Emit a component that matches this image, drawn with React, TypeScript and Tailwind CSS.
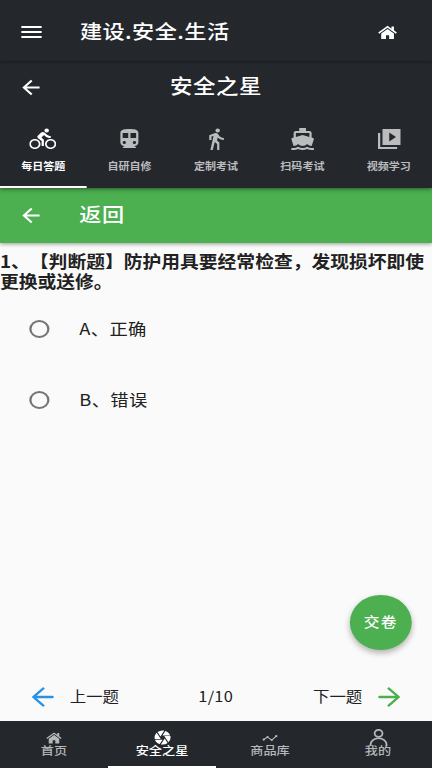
import {
    MdArrowBack,
    MdCamera,
    MdDirectionsBike,
    MdDirectionsBoat,
    MdDirectionsSubway,
    MdDirectionsWalk,
    MdMenu,
} from 'react-icons/md';

interface IconProps {
    className?: string;
}

const VideoIcon = ({ className }: IconProps) => (
    <svg viewBox="0 0 24 24" fill="currentColor" className={className}>
        <path d="M4 6H2v16h17v-2H4zM6 2h16v16H6zM12 5.500v9l6-4.500z" fillRule="evenodd" />
    </svg>
);

const HomeIcon = ({ className }: IconProps) => (
    <svg viewBox="0 0 18 15" fill="currentColor" className={className}>
        <path d="M9 .4L.2 7.500l1 1.200L9 2.500l7.800 6.200 1-1.200-2.800-2.300V1.200h-2.300v2.200z" />
        <path d="M9 3.800L3 8.600v5.900h4.500v-4h3v4H15V8.600z" />
    </svg>
);

const TrendIcon = ({ className }: IconProps) => (
    <svg viewBox="0 0 16 8" fill="none" stroke="currentColor" strokeWidth="1.3" className={className}>
        <path d="M1.600 5.800L5.500 3l4.300 3.400 4.600-4.600" />
        <g fill="currentColor" stroke="none">
            <circle cx="1.600" cy="5.800" r="1.300" />
            <circle cx="5.500" cy="2.900" r="1.200" />
            <circle cx="9.800" cy="6.300" r="1.200" />
            <circle cx="14.400" cy="1.800" r="1.300" />
        </g>
    </svg>
);

const PersonIcon = ({ className }: IconProps) => (
    <svg viewBox="0 0 18 18" fill="none" stroke="currentColor" strokeWidth="1.7" className={className}>
        <circle cx="9" cy="4.600" r="3.700" />
        <path d="M1.500 18v-1.500C1.500 12.600 4.800 9.800 9 9.800s7.500 2.800 7.500 6.700V18" />
    </svg>
);

const LongArrow = ({ className }: IconProps) => (
    <svg
        viewBox="0 0 20 20"
        fill="none"
        stroke="currentColor"
        strokeWidth="2.4"
        strokeLinecap="round"
        strokeLinejoin="round"
        className={className}
    >
        <path d="M18.600 10H2M10.400 1.500L1.700 10l8.700 8.500" />
    </svg>
);

const tabs = [
    { label: '每日答题', icon: MdDirectionsBike },
    { label: '自研自修', icon: MdDirectionsSubway },
    { label: '定制考试', icon: MdDirectionsWalk },
    { label: '扫码考试', icon: MdDirectionsBoat },
    { label: '视频学习', icon: VideoIcon },
];

const options = ['A、正确', 'B、错误'];

const navItems = [
    { label: '首页', icon: HomeIcon, iconClass: 'w-[14px] h-[12px]' },
    { label: '安全之星', icon: MdCamera, iconClass: 'w-[17px] h-[17px]' },
    { label: '商品库', icon: TrendIcon, iconClass: 'w-[14px] h-[8px]' },
    { label: '我的', icon: PersonIcon, iconClass: 'w-[17px] h-[17px]' },
];

const App = () => {
    return (
        <div className="w-[432px] h-[768px] overflow-hidden">
            <div className="w-[384px] h-[768px] origin-left scale-x-[1.125] flex flex-col bg-[#fafafa] text-[#212121] font-['Noto_Sans_CJK_SC',sans-serif] [text-spacing-trim:space-all]">
                <header className="relative z-30 h-[61px] shrink-0 flex items-center bg-[#24282d] text-white shadow-[0_1px_3px_rgba(0,0,0,0.35)]">
                    <MdMenu className="ml-[15.500px] mt-[3px] w-[24px] h-[24px]" />
                    <h1 className="ml-[31.500px] text-[19.7px] leading-[24px] font-medium tracking-[0.4px]">建设.安全.生活</h1>
                    <HomeIcon className="ml-auto mr-[31px] mt-[4px] w-[17px] h-[15px]" />
                </header>

                <section className="relative z-20 h-[127px] shrink-0 flex flex-col bg-[#24282d] shadow-[0_1px_4px_rgba(0,0,0,0.5)]">
                    <div className="h-[52px] grid grid-cols-[1fr_auto_1fr] items-center text-white">
                        <MdArrowBack className="ml-[16px] w-[23px] h-[23px]" />
                        <h2 className="-mt-[2px] text-[20px] leading-[24px] font-medium tracking-[0.4px]">安全之星</h2>
                    </div>
                    <nav className="flex-1 grid grid-cols-5">
                        {tabs.map(({ label, icon: Icon }, idx) => (
                            <button
                                key={label}
                                className={
                                    idx === 0
                                        ? 'flex flex-col items-center pt-[14px] text-white border-b-2 border-white'
                                        : 'flex flex-col items-center pt-[14px] text-[#babcbe] border-b-2 border-transparent'
                                }
                            >
                                <Icon className="w-[24px] h-[24px]" />
                                <span className="mt-[8px] text-[9.8px] leading-[14px] font-bold">{label}</span>
                            </button>
                        ))}
                    </nav>
                </section>

                <div className="relative z-10 h-[55px] shrink-0 flex items-center bg-[#4caf50] text-white shadow-[0_1px_4px_rgba(0,0,0,0.4)]">
                    <MdArrowBack className="ml-[16px] w-[23px] h-[23px]" />
                    <span className="ml-[31.500px] -mt-[3px] text-[19.7px] leading-[24px] font-medium tracking-[0.4px]">返回</span>
                </div>

                <main className="flex-1 flex flex-col">
                    <h3 className="mt-[8px] text-[16.7px] leading-[20px] font-bold">
                        1、【判断题】防护用具要经常检查，发现损坏即使更换或送修。
                    </h3>
                    <div className="mt-[3px]">
                        {options.map((option) => (
                            <label key={option} className="h-[70.500px] flex items-center pl-[26px]">
                                <span className="w-[18px] h-[18px] rounded-full border-2 border-[#757575]" />
                                <span className="ml-[26.500px] -mt-[2px] text-[16.3px] leading-[20px] tracking-[0.3px]">{option}</span>
                            </label>
                        ))}
                    </div>
                    <button className="mt-auto ml-auto mr-[18px] w-[55px] h-[55px] rounded-full bg-[#4caf50] text-white text-[14px] font-medium leading-[20px] pb-[3px] tracking-[1.2px] shadow-[0_3px_6px_rgba(0,0,0,0.3)]">
                        交卷
                    </button>
                    <div className="mt-[22px] h-[49px] flex items-center text-[14.6px] leading-[20px]">
                        <LongArrow className="ml-[28px] w-[20px] h-[20px] text-[#2b91e3]" />
                        <span className="ml-[14px] -mt-[2px]">上一题</span>
                        <span className="ml-[70.500px] -mt-[2px] tracking-[0.2px]">1/10</span>
                        <span className="ml-auto -mt-[2px]">下一题</span>
                        <LongArrow className="ml-[14px] mr-[28px] w-[20px] h-[20px] rotate-180 text-[#4caf50]" />
                    </div>
                </main>

                <footer className="h-[47px] shrink-0 grid grid-cols-4 bg-[#24282d]">
                    {navItems.map(({ label, icon: Icon, iconClass }, idx) => (
                        <button
                            key={label}
                            className={
                                idx === 1
                                    ? 'flex flex-col items-center pt-[8px] text-white border-b-2 border-white'
                                    : 'flex flex-col items-center pt-[8px] text-[#b5b7b9] border-b-2 border-transparent'
                            }
                        >
                            <span className="h-[17px] flex items-center">
                                <Icon className={iconClass} />
                            </span>
                            <span className="-mt-[3px] text-[11.7px] leading-[14px] font-medium">{label}</span>
                        </button>
                    ))}
                </footer>
            </div>
        </div>
    );
};

export default App;
